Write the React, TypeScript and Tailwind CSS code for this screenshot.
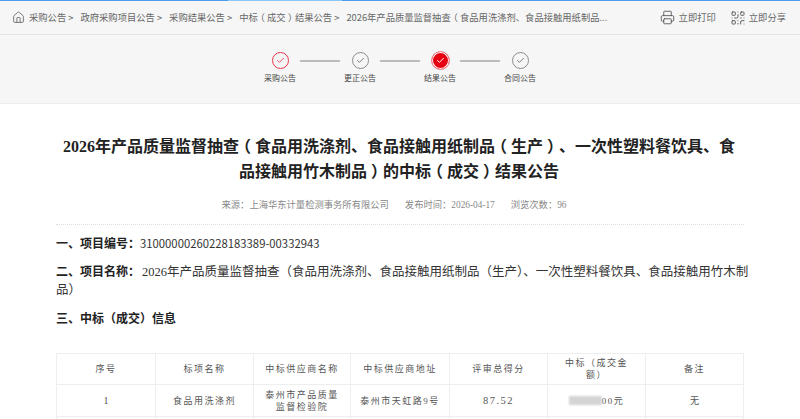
import React from 'react';
import { Home, Printer, QrCode, Check } from 'lucide-react';

const crumbs = ['采购公告', '政府采购项目公告', '采购结果公告', '中标（成交）结果公告'];

const steps = [
  { name: '采购公告', state: 'done' },
  { name: '更正公告', state: 'idle' },
  { name: '结果公告', state: 'active' },
  { name: '合同公告', state: 'idle' },
];

// full-width brackets sit centred in their cell on the real page
function Parens({ text }: { text: string }) {
  return (
    <>
      {text.split(/([（）])/).map((part, i) =>
        part === '（' || part === '）' ? (
          <span key={i} className="inline-block w-[1em] text-center [font-feature-settings:'halt']">{part}</span>
        ) : (
          part
        )
      )}
    </>
  );
}

function Step({ name, state }: { name: string; state: string }) {
  return (
    <div className="flex w-[40px] flex-col items-center">
      <div className="flex h-[20px] w-[20px] items-center justify-center">
        {state === 'active' && (
          <div className="flex h-[19px] w-[19px] items-center justify-center rounded-full border border-[#f08a94] bg-[#e60012] shadow-[inset_0_0_0_1px_#fff]">
            <Check size={9} strokeWidth={2.5} className="text-white" />
          </div>
        )}
        {state === 'done' && (
          <div className="flex h-[17px] w-[17px] items-center justify-center rounded-full border-[1.5px] border-[#e8334a]">
            <Check size={9} strokeWidth={2.2} className="text-[#e8334a]" />
          </div>
        )}
        {state === 'idle' && (
          <div className="flex h-[17px] w-[17px] items-center justify-center rounded-full border-[1.5px] border-[#8c8c8c]">
            <Check size={9} strokeWidth={2.2} className="text-[#666]" />
          </div>
        )}
      </div>
      <span className="mt-[2px] whitespace-nowrap text-[8px] leading-[12px] text-[#444]">{name}</span>
    </div>
  );
}

const cols = ['w-[99px]', 'w-[98px]', 'w-[97px]', 'w-[99px]', 'w-[98px]', 'w-[98px]', 'w-[98px]'];

export default function App() {
  return (
    <div className="h-[419px] w-[800px] overflow-hidden bg-white font-['Noto_Sans_CJK_SC',sans-serif]">
      <div className="flex h-[1px] bg-[#4a9fe8]">
        <div className="ml-[228px] w-[114px] bg-[#8cc8f5]" />
      </div>
      <div className="border-b border-[#eeeeee] bg-[#f6f6f6]">
        <div className="flex h-[34px] items-center justify-between border-b border-[#e3e3e3] pl-[12px] pr-[14px] text-[9.3px] text-[#666]">
          <div className="flex items-center whitespace-nowrap">
            <Home size={13} strokeWidth={1.4} className="mr-[4px] text-[#555]" />
            {crumbs.map(c => (
              <span key={c} className="mr-[7px]"><Parens text={c} /> &gt;</span>
            ))}
            <span><Parens text="2026年产品质量监督抽查（食品用洗涤剂、食品接触用纸制品..." /></span>
          </div>
          <div className="flex items-center gap-[14px]">
            <div className="flex items-center gap-[4px]">
              <Printer size={15} strokeWidth={1.4} className="text-[#555]" /> 立即打印
            </div>
            <div className="flex items-center gap-[3px]">
              <QrCode size={16} strokeWidth={1.4} className="text-[#555]" /> 立即分享
            </div>
          </div>
        </div>
        <div className="flex h-[68px] justify-center pt-[15px]">
          {steps.map((s, i) => (
            <div key={s.name} className="flex items-start">
              <Step name={s.name} state={s.state} />
              {i < steps.length - 1 && <div className="mt-[10px] h-[1.5px] w-[40px] bg-[#bbb]" />}
            </div>
          ))}
        </div>
      </div>
      <div className="px-[56px]">
        <h1 className="mx-[2px] mt-[30px] pr-[2px] text-center font-['Liberation_Serif','Noto_Sans_CJK_SC',serif] text-[16px] font-bold leading-[25px] text-[#222]">
          <Parens text="2026年产品质量监督抽查（食品用洗涤剂、食品接触用纸制品（生产）、一次性塑料餐饮具、食品接触用竹木制品）的中标（成交）结果公告" />
        </h1>
        <div className="mt-[15px] flex h-[13px] items-center justify-center gap-[16px] pr-[12px] font-['Liberation_Serif','Noto_Sans_CJK_SC',serif] text-[9.3px] text-[#888]">
          <span>来源：上海华东计量检测事务所有限公司</span>
          <span>发布时间：2026-04-17</span>
          <span>浏览次数：96</span>
        </div>
        <div className="mt-[12px] border-t border-dotted border-[#ddd]" />
        <p className="mt-[9px] text-[11.3px] leading-[18px] text-[#333]">
          <b className="text-[12px] text-[#222]">一、项目编号：</b>31000000260228183389-00332943
        </p>
        <p className="mr-[-12px] mt-[10px] font-['Liberation_Serif','Noto_Sans_CJK_SC',serif] text-[12.5px] leading-[18px] text-[#333]">
          <b className="mr-[2px] font-['Noto_Sans_CJK_SC',sans-serif] text-[12px] text-[#222]">二、项目名称：</b>2026年产品质量监督抽查（食品用洗涤剂、食品接触用纸制品（生产）、一次性塑料餐饮具、食品接触用竹木制品）
        </p>
        <p className="mt-[10px] text-[12px] leading-[18px] text-[#222]">
          <b>三、中标（成交）信息</b>
        </p>
        <table className="mt-[26px] table-fixed border-collapse text-center font-['Liberation_Serif','Noto_Sans_CJK_SC',serif] text-[9px] leading-[12px] text-[#555]">
          <colgroup>
            {cols.map((c, i) => <col key={i} className={c} />)}
          </colgroup>
          <tbody>
            <tr className="h-[31px]">
              {['序号', '标项名称', '中标供应商名称', '中标供应商地址', '评审总得分', '中标（成交金额）', '备注'].map(h => (
                <td key={h} className="border border-[#eee] px-[10px] tracking-[1.5px]">{h}</td>
              ))}
            </tr>
            <tr className="h-[32px]">
              <td className="border border-[#eee] text-[10px]">1</td>
              <td className="border border-[#eee] tracking-[1.5px]">食品用洗涤剂</td>
              <td className="border border-[#eee] px-[10px] tracking-[1.5px]">泰州市产品质量监督检验院</td>
              <td className="border border-[#eee] tracking-[1.5px]">泰州市天虹路9号</td>
              <td className="border border-[#eee] text-[10.5px] tracking-[1.5px]">87.52</td>
              <td className="border border-[#eee]">
                <div className="flex items-center justify-center">
                  <span className="h-[9px] w-[33px] bg-[#d4d4d4] blur-[1px]" />
                  <span className="tracking-[1.5px]">00元</span>
                </div>
              </td>
              <td className="border border-[#eee]">无</td>
            </tr>
            <tr className="h-[20px]">
              {cols.map((c, i) => <td key={i} className="border border-[#eee]" />)}
            </tr>
          </tbody>
        </table>
      </div>
    </div>
  );
}
